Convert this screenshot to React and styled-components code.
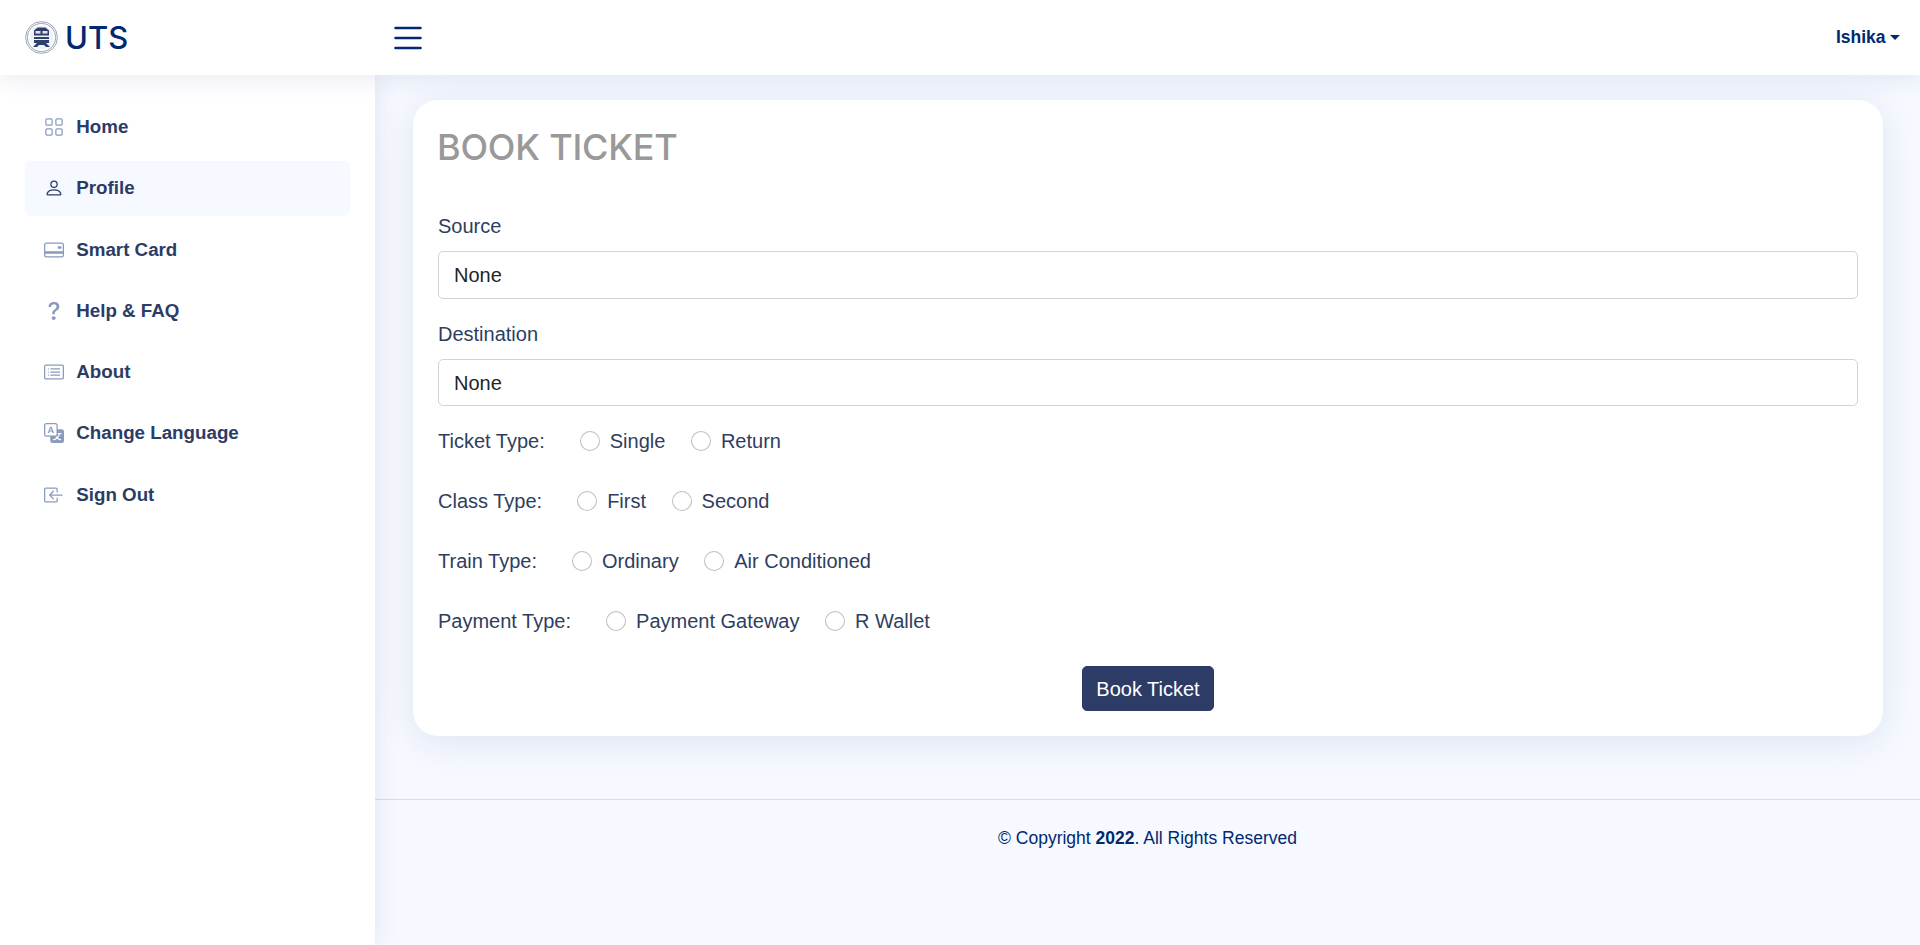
import styled, { createGlobalStyle } from 'styled-components';
import {
  BsGrid,
  BsPerson,
  BsCreditCard2Back,
  BsQuestion,
  BsCardList,
  BsTranslate,
  BsBoxArrowInLeft,
  BsList,
} from 'react-icons/bs';

const navItems = [
  { label: 'Home', icon: BsGrid, size: 20 },
  { label: 'Profile', icon: BsPerson, size: 20, active: true },
  { label: 'Smart Card', icon: BsCreditCard2Back, size: 20 },
  { label: 'Help & FAQ', icon: BsQuestion, size: 32 },
  { label: 'About', icon: BsCardList, size: 20 },
  { label: 'Change Language', icon: BsTranslate, size: 20 },
  { label: 'Sign Out', icon: BsBoxArrowInLeft, size: 20 },
];

const radioGroups = [
  { label: 'Ticket Type:', name: 'ticket', options: ['Single', 'Return'] },
  { label: 'Class Type:', name: 'class', options: ['First', 'Second'] },
  { label: 'Train Type:', name: 'train', options: ['Ordinary', 'Air Conditioned'] },
  { label: 'Payment Type:', name: 'payment', options: ['Payment Gateway', 'R Wallet'] },
];

function LogoMark() {
  return (
    <svg width="33" height="33" viewBox="0 0 33 33" fill="none">
      <circle cx="16.5" cy="16.5" r="15.9" stroke="#6f7da0" strokeWidth="0.7" />
      <circle cx="16.5" cy="16.5" r="14.2" stroke="#6f7da0" strokeWidth="0.7" />
      <circle cx="16.5" cy="16.5" r="12" fill="#f1f2f7" />
      <path d="M9 9.5 L12.5 6.5 H20.5 L24 9.5 V22 H9 Z" fill="#2f3f6c" />
      <rect x="10.5" y="10" width="5" height="2.6" fill="#dfe3ee" />
      <rect x="17.5" y="10" width="5" height="2.6" fill="#dfe3ee" />
      <rect x="9" y="14.5" width="15" height="1.5" fill="#f1f3f8" />
      <rect x="9" y="18" width="15" height="1" fill="#f1f3f8" />
      <path d="M8 26 L12 22 H21 L25 26 H21 L19 24 H14 L12 26 Z" fill="#2f3f6c" />
    </svg>
  );
}

export default function App() {
  return (
    <>
      <GlobalStyle />
      <Header>
        <Brand>
          <LogoMark />
          <BrandName>UTS</BrandName>
        </Brand>
        <Toggle>
          <BsList size={40} />
        </Toggle>
        <UserMenu>Ishika</UserMenu>
      </Header>
      <Body>
        <Sidebar>
          {navItems.map(({ label, icon: Icon, size, active }) => (
            <NavLink key={label} $active={active}>
              <NavIcon $active={active}>
                <Icon size={size} />
              </NavIcon>
              {label}
            </NavLink>
          ))}
        </Sidebar>
        <Main>
          <Content>
            <Card>
              <Title>BOOK TICKET</Title>
              <FieldLabel>Source</FieldLabel>
              <FieldBox>None</FieldBox>
              <FieldLabel>Destination</FieldLabel>
              <FieldBox>None</FieldBox>
              {radioGroups.map((group) => (
                <RadioRow key={group.name}>
                  <RowLabel>{group.label}</RowLabel>
                  {group.options.map((option) => (
                    <RadioOption key={option}>
                      <RadioInput type="radio" name={group.name} />
                      {option}
                    </RadioOption>
                  ))}
                </RadioRow>
              ))}
              <Actions>
                <BookButton type="button">Book Ticket</BookButton>
              </Actions>
            </Card>
          </Content>
          <Footer>
            © Copyright <strong>2022</strong>. All Rights Reserved
          </Footer>
        </Main>
      </Body>
    </>
  );
}

const GlobalStyle = createGlobalStyle`
  * {
    box-sizing: border-box;
  }
  html, body, #root {
    height: 100%;
  }
  body {
    margin: 0;
    background: #f6f9ff;
    color: #2e3e5e;
    font-family: "Liberation Sans", Arial, sans-serif;
    font-size: 20px;
    overflow: hidden;
  }
  #root {
    display: flex;
    flex-direction: column;
  }
`;

const Header = styled.header`
  position: relative;
  z-index: 3;
  flex: none;
  display: flex;
  align-items: center;
  height: 75px;
  padding: 0 20px 0 25px;
  background: #fff;
  box-shadow: 0 2.5px 25px rgba(1, 41, 112, 0.1);
`;
const Brand = styled.div`
  display: flex;
  align-items: center;
  gap: 7px;
  width: 362.75px;
`;
const BrandName = styled.span`
  font-family: Inter, sans-serif;
  font-size: 31px;
  font-weight: 500;
  line-height: 1;
  color: #012970;
`;
const Toggle = styled.div`
  display: flex;
  color: #012970;
`;
const UserMenu = styled.div`
  margin-left: auto;
  font-size: 17.5px;
  font-weight: 700;
  color: #012970;
  &::after {
    content: '';
    display: inline-block;
    margin-left: 4.5px;
    vertical-align: 3px;
    border-top: 5.25px solid;
    border-right: 5.25px solid transparent;
    border-left: 5.25px solid transparent;
  }
`;
const Body = styled.div`
  flex: 1;
  display: flex;
  min-height: 0;
`;
const Sidebar = styled.nav`
  position: relative;
  z-index: 2;
  flex: none;
  display: flex;
  flex-direction: column;
  gap: 6.25px;
  width: 375px;
  padding: 25px;
  background: #fff;
  box-shadow: 0 0 25px rgba(1, 41, 112, 0.1);
`;
const NavLink = styled.a`
  display: flex;
  align-items: center;
  height: 55px;
  padding: 0 18.75px 1px;
  border-radius: 5px;
  background: ${(p) => (p.$active ? '#f6f9ff' : 'transparent')};
  font-size: 18.75px;
  font-weight: 700;
  color: #2c3c66;
`;
const NavIcon = styled.span`
  display: flex;
  flex: none;
  justify-content: center;
  align-items: center;
  width: 20px;
  height: 20px;
  margin-right: 12.5px;
  color: ${(p) => (p.$active ? '#2c3c66' : '#899bbd')};
  svg {
    flex: none;
  }
`;
const Main = styled.main`
  flex: 1;
  min-width: 0;
`;
const Content = styled.div`
  padding: 25px 37px 62.5px 38px;
`;
const Card = styled.section`
  padding: 25px;
  border-radius: 25px;
  background: #fff;
  box-shadow: 0 6px 37px rgba(1, 41, 112, 0.1);
`;
const Title = styled.h1`
  height: 86px;
  margin: 0 0 0 -1px;
  font-family: Inter, sans-serif;
  font-size: 36px;
  font-weight: 500;
  letter-spacing: -0.2px;
  line-height: 44px;
  color: #999;
`;
const FieldLabel = styled.div`
  height: 30px;
  margin-bottom: 10px;
  line-height: 30px;
`;
const FieldBox = styled.div`
  height: 47.5px;
  margin-bottom: 20px;
  padding: 0 15px;
  border: 1.25px solid #ced4da;
  border-radius: 5px;
  background: #fff;
  line-height: 46px;
  color: #212529;
`;
const RadioRow = styled.div`
  display: flex;
  align-items: center;
  height: 30px;
  margin-bottom: 30px;
`;
const RowLabel = styled.span`
  margin-right: 35px;
`;
const RadioOption = styled.label`
  display: flex;
  align-items: center;
  gap: 10px;
  margin-right: 25.6px;
`;
const RadioInput = styled.input`
  appearance: none;
  flex: none;
  width: 20px;
  height: 20px;
  margin: 0;
  border: 1.25px solid rgba(0, 0, 0, 0.25);
  border-radius: 50%;
  background: #fff;
`;
const Actions = styled.div`
  display: flex;
  justify-content: center;
`;
const BookButton = styled.button`
  height: 45px;
  padding: 1px 13.5px 0;
  border: 1.25px solid #2c3c66;
  border-radius: 5px;
  background: #2c3c66;
  font: inherit;
  color: #fff;
`;
const Footer = styled.footer`
  padding: 23.75px 25px;
  border-top: 1.25px solid #cddfff;
  text-align: center;
  font-size: 17.5px;
  line-height: 30px;
  color: #012970;
`;
